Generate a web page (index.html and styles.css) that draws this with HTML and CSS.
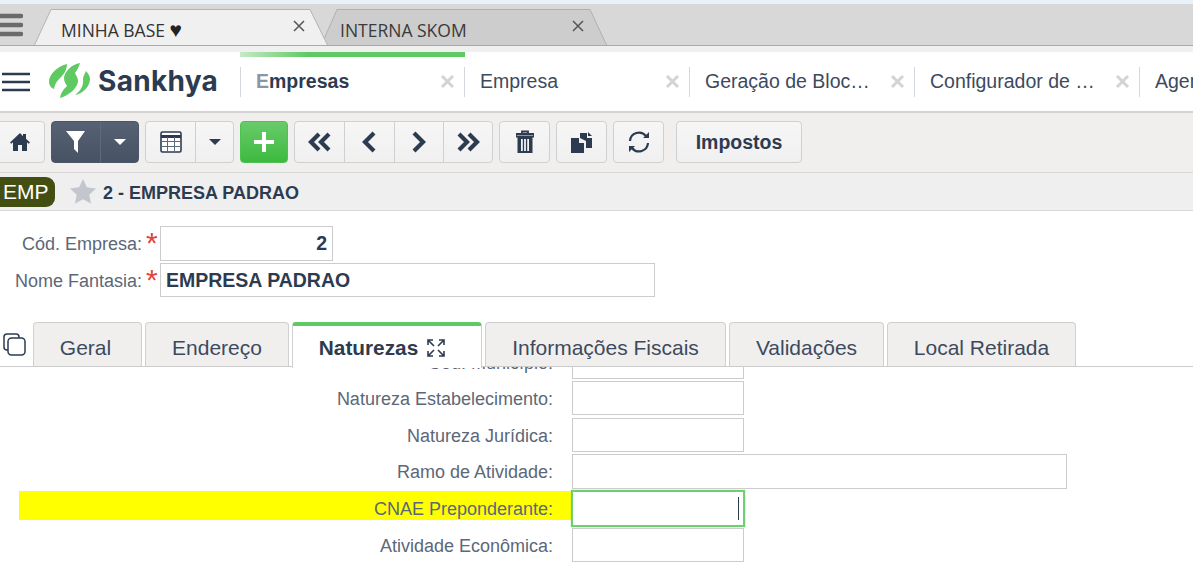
FILE: index.html
```html
<!DOCTYPE html>
<html lang="pt">
<head>
<meta charset="utf-8">
<title>Sankhya</title>
<link rel="stylesheet" href="styles.css">
</head>
<body>
<div class="topstrip"></div>
<div class="browser">
  <svg class="menu-icon" width="24" height="26" viewBox="0 0 24 26"><path d="M0 3h22M0 12h22M0 21h22" stroke="#6a6a6a" stroke-width="4.4" stroke-linecap="round"/></svg>
  <div class="btab btab-active">
    <svg class="btab-shape" width="296" height="38" viewBox="0 0 296 38" preserveAspectRatio="none"><path d="M1 37L18 .5H277L295 37Z" fill="#f0f0f0" stroke="#b4b4b4"/></svg>
    <span class="btab-label">MINHA BASE <span class="heart">♥</span></span>
    <svg class="btab-x" width="12" height="12" viewBox="0 0 12 12"><path d="M1 1l10 10M11 1L1 11" stroke="#555" stroke-width="1.500"/></svg>
  </div>
  <div class="btab btab-other">
    <svg class="btab-shape" width="288" height="38" viewBox="0 0 288 38" preserveAspectRatio="none"><path d="M1 37L17 .5H270L287 37Z" fill="#cdcdcd" stroke="#b0b0b0"/></svg>
    <span class="btab-label">INTERNA SKOM</span>
    <svg class="btab-x" width="12" height="12" viewBox="0 0 12 12"><path d="M1 1l10 10M11 1L1 11" stroke="#555" stroke-width="1.500"/></svg>
  </div>
</div>
<div class="subline"></div>

<header class="appbar">
  <svg class="hamb" width="28" height="20" viewBox="0 0 28 20"><path d="M0 2h28M0 10h28M0 18h28" stroke="#2d3b50" stroke-width="2.6"/></svg>
  <div class="logo">
    <svg width="42" height="38" viewBox="0 0 42 38"><path d="M18 2C9 4 0 12 0 20c0 3 2 6 5 7 1-6 4-9 8-13 3-3 5-8 5-12Z" fill="#5fc962"/><path d="M31 1C23 2 15 10 15 16c0 4 2 6 3 8-3 3-6 6-7 12 8-2 18-10 18-17 0-3-2-6-3-8 2-3 4-6 5-10Z" fill="#5fc962"/><path d="M37 9c-1 3-3 5-3 8 1 5-2 12-8 16 8-1 15-9 15-16 0-3-2-6-4-8Z" fill="#5fc962"/></svg>
    <span class="logo-text">Sankhya</span>
  </div>
  <nav class="apptabs">
    <div class="apptab apptab-active"><span class="apptab-label"><b class="fade">E</b>mpresas</span><svg class="apptab-x" width="15" height="15" viewBox="0 0 15 15"><path d="M2 2l11 11M13 2L2 13" stroke="#d4d4d4" stroke-width="3"/></svg></div>
    <div class="apptab"><span class="apptab-label">Empresa</span><svg class="apptab-x" width="15" height="15" viewBox="0 0 15 15"><path d="M2 2l11 11M13 2L2 13" stroke="#d4d4d4" stroke-width="3"/></svg></div>
    <div class="apptab"><span class="apptab-label">Geração de Bloc…</span><svg class="apptab-x" width="15" height="15" viewBox="0 0 15 15"><path d="M2 2l11 11M13 2L2 13" stroke="#d4d4d4" stroke-width="3"/></svg></div>
    <div class="apptab"><span class="apptab-label">Configurador de …</span><svg class="apptab-x" width="15" height="15" viewBox="0 0 15 15"><path d="M2 2l11 11M13 2L2 13" stroke="#d4d4d4" stroke-width="3"/></svg></div>
    <div class="apptab"><span class="apptab-label">Agenda</span></div>
  </nav>
</header>

<div class="toolbar">
  <div class="btn btn-home">
    <svg width="22" height="20" viewBox="0 0 22 20"><path d="M11 1L1 10.500l1.300 1.300L4 10.300V19h5v-6h4v6h5v-8.700l1.700 1.500 1.300-1.300-4-3.800V2h-3v2.200Z" fill="#2d3b50"/></svg>
  </div>
  <div class="btn-group btn-dark">
    <div class="seg seg-a"><svg width="20" height="23" viewBox="0 0 20 23"><path d="M0 0h19L12 10v12L8 18V10Z" fill="#fff"/></svg></div>
    <div class="seg seg-b"><span class="caret caret-w"></span></div>
  </div>
  <div class="btn-group">
    <div class="seg seg-c"><svg width="22" height="22" viewBox="0 0 22 22"><rect x="1" y="1" width="20" height="20" rx="1.500" fill="#fff" stroke="#2d3b50" stroke-width="1.600"/><path d="M1 5.500h20" stroke="#2d3b50" stroke-width="3"/><path d="M1 10.500h20M1 15.500h20M7.500 6v15M14.500 6v15" stroke="#5d6a7c"/></svg></div>
    <div class="seg seg-d"><span class="caret"></span></div>
  </div>
  <div class="btn btn-add">
    <svg width="22" height="22" viewBox="0 0 22 22"><path d="M11 1v20M1 11h20" stroke="#fff" stroke-width="4"/></svg>
  </div>
  <div class="btn-group">
    <div class="seg seg-n"><svg width="24" height="20" viewBox="0 0 24 20"><path d="M11 2L3 10l8 8M21 2l-8 8 8 8" fill="none" stroke="#2d3b50" stroke-width="4.200"/></svg></div>
    <div class="seg seg-n"><svg width="16" height="22" viewBox="0 0 16 22"><path d="M13 2L4 11l9 9" fill="none" stroke="#2d3b50" stroke-width="4.200"/></svg></div>
    <div class="seg seg-n"><svg width="16" height="22" viewBox="0 0 16 22"><path d="M3 2l9 9-9 9" fill="none" stroke="#2d3b50" stroke-width="4.200"/></svg></div>
    <div class="seg seg-n"><svg width="24" height="20" viewBox="0 0 24 20"><path d="M3 2l8 8-8 8M13 2l8 8-8 8" fill="none" stroke="#2d3b50" stroke-width="4.200"/></svg></div>
  </div>
  <div class="btn btn-icon">
    <svg width="18" height="24" viewBox="0 0 18 24"><path d="M0 4h18v2.500H0ZM6 4V1.500h6V4" fill="none" stroke="#2d3b50" stroke-width="1.800"/><path d="M1.500 7h15v16h-15ZM5 9v12h1.800V9ZM8.100 9v12h1.800V9ZM11.200 9v12H13V9Z" fill="#2d3b50" fill-rule="evenodd"/></svg>
  </div>
  <div class="btn btn-icon">
    <svg width="22" height="21" viewBox="0 0 22 21"><path d="M9 6V1h7v5h5v10h-6V9Z" fill="#2d3b50"/><path d="M17 0v4h4Z" fill="#2d3b50"/><path d="M0 6h8l0 5h5v10H0Z" fill="#2d3b50"/></svg>
  </div>
  <div class="btn btn-icon">
    <svg width="22" height="24" viewBox="0 0 22 24"><path d="M2 11a9 9 0 0 1 16-5M20 13a9 9 0 0 1-16 5" fill="none" stroke="#2d3b50" stroke-width="2.200"/><path d="M15 8h6V2ZM7 16H1v6Z" fill="#2d3b50"/></svg>
  </div>
  <div class="btn btn-text">Impostos</div>
</div>

<div class="crumb">
  <span class="pill">EMP</span>
  <svg class="star" width="26" height="25" viewBox="0 0 26 25"><path d="M13 0l3.900 8.300 9.100 1.100-6.700 6.300 1.800 9L13 20.200 4.900 24.700l1.800-9L0 9.400l9.100-1.100Z" fill="#c3c7cd"/></svg>
  <span class="crumb-title">2 - EMPRESA PADRAO</span>
</div>

<section class="head-form">
  <div class="hrow"><label class="hlabel">Cód. Empresa:</label><span class="req">*</span><div class="input input-code">2</div></div>
  <div class="hrow"><label class="hlabel">Nome Fantasia:</label><span class="req">*</span><div class="input input-name">EMPRESA PADRAO</div></div>
</section>

<div class="tabs">
  <svg class="copy-icon" width="24" height="24" viewBox="0 0 24 24"><rect x="6" y="6" width="17" height="17" rx="3.500" fill="none" stroke="#2d3b50" stroke-width="1.500"/><path d="M6 18H5a3 3 0 0 1-3-3V5a3 3 0 0 1 3-3h9a3 3 0 0 1 3 3v1" fill="none" stroke="#2d3b50" stroke-width="1.500"/></svg>
  <div class="tab t-geral">Geral</div>
  <div class="tab t-end">Endereço</div>
  <div class="tab tab-active t-nat">Naturezas
    <svg width="20" height="20" viewBox="0 0 20 20"><path d="M2 7V2h5M13 2h5v5M18 13v5h-5M7 18H2v-5M2 2l6 6M18 2l-6 6M18 18l-6-6M2 18l6-6" fill="none" stroke="#2d3b50" stroke-width="1.600"/></svg>
  </div>
  <div class="tab t-inf">Informações Fiscais</div>
  <div class="tab t-val">Validações</div>
  <div class="tab t-loc">Local Retirada</div>
</div>

<section class="panel">
  <div class="frow frow-clip"><label class="flabel">Cód. Município:</label><div class="finput"></div></div>
  <div class="frow frow-tall"><label class="flabel">Natureza Estabelecimento:</label><div class="finput"></div></div>
  <div class="frow"><label class="flabel">Natureza Jurídica:</label><div class="finput"></div></div>
  <div class="frow"><label class="flabel">Ramo de Atividade:</label><div class="finput finput-wide"></div></div>
  <div class="frow frow-focus"><label class="flabel flabel-mark">CNAE Preponderante:</label><div class="finput finput-focus"><span class="cursor"></span></div></div>
  <div class="frow"><label class="flabel">Atividade Econômica:</label><div class="finput"></div></div>
</section>
</body>
</html>
```
FILE: styles.css
```css
* { box-sizing: border-box; }
html, body { margin: 0; padding: 0; height: 564px; overflow: hidden; background: #fff; }
body { font-family: "Liberation Sans", Arial, sans-serif; color: #2d3b50; }

.topstrip { height: 4px; background: #eaf2f9; }
.browser {
  height: 42px; background: #d8d8d8; border-bottom: 1px solid #a9a9a9;
  display: flex; align-items: flex-end; overflow: hidden; position: relative;
}
.menu-icon { position: absolute; left: -1px; top: 9px; }
.btab { position: relative; height: 37px; margin-bottom: -1px; display: flex; align-items: center; font-family: "Open Sans", sans-serif; font-size: 17.500px; color: #333; }
.btab-shape { position: absolute; left: 0; top: 0; }
.btab-active { width: 296px; margin-left: 33px; z-index: 2; }
.btab-other { width: 288px; margin-left: -9px; color: #3a3a3a; }
.btab-label { position: relative; padding: 4px 0 0 28px; }
.btab-other .btab-label { padding-left: 20px; }
.heart { font-size: 21px; line-height: 20px; color: #222; }
.btab-x { position: absolute; top: 11px; }
.btab-active .btab-x { left: 260px; }
.btab-other .btab-x { left: 252px; }
.subline { height: 6px; background: #f0f0f0; }

.appbar { height: 61px; display: flex; align-items: stretch; background: #fff; border-bottom: 2px solid #d5d2d2; position: relative; }
.hamb { margin: 20px 0 0 2px; flex: none; }
.logo { display: flex; align-items: center; width: 210px; padding-left: 19px; flex: none; margin-bottom: 2px; }
.logo-text { font-family: Inter, sans-serif; font-weight: 700; font-size: 28px; margin-left: 7px; color: #2d3b50; letter-spacing: .3px; }
.apptabs { display: flex; }
.apptab { width: 225px; flex: none; position: relative; display: flex; align-items: center; justify-content: space-between; padding: 0 9px 0 16px; font-size: 19.500px; color: #3d4a5e; }
.apptab-active { width: 224px; }
.apptab::before { content: ""; position: absolute; left: 0; top: 15px; height: 30px; width: 1px; background: #d3d8de; }
.apptab-active::after { content: ""; position: absolute; left: 0; top: 0; width: 225px; height: 5px; background: linear-gradient(90deg, #c4ebc6, #5fca63 30%); }
.apptab-active .apptab-label { font-weight: 700; color: #2d3b50; }
.fade { color: #8b95a3; }
.apptab-x { flex: none; }

.toolbar { height: 60px; background: #f0efee; border-bottom: 1px solid #d6d6d6; display: flex; align-items: flex-start; padding: 8px 0 0 0; gap: 6px; margin-bottom: 0; }
.btn, .btn-group { height: 42px; border: 1px solid #d0d0d0; border-radius: 4px; background: linear-gradient(#f6f6f6, #f0f0f0); display: flex; align-items: center; justify-content: center; flex: none; }
.btn-home { width: 50px; margin-left: -5px; }
.btn-group { overflow: hidden; }
.btn-dark { background: linear-gradient(#566273, #475364); border-color: #4b5768; }
.seg { height: 100%; display: flex; align-items: center; justify-content: center; border-left: 1px solid #d0d0d0; }
.seg:first-child { border-left: 0; }
.btn-dark .seg { border-left-color: #5f6b7c; }
.seg-a { width: 48px; }
.seg-b { width: 38px; }
.seg-c { width: 49px; }
.seg-d { width: 38px; }
.seg-n { width: 49.250px; }
.caret { width: 0; height: 0; border: 6px solid transparent; border-top: 6px solid #2d3b50; border-bottom: 0; }
.caret-w { border-top-color: #fff; }
.btn-add { width: 48px; background: linear-gradient(#69cb6a, #3dba3f); border-color: #4fc052; }
.btn-icon { width: 51px; }
.btn-text { width: 126px; margin-left: 6px; font-weight: 700; font-size: 19.500px; color: #2d3b50; }

.crumb { height: 38px; background: #efefef; border-bottom: 1px solid #d8d8d8; display: flex; align-items: center; }
.pill { background: #434f12; color: #fff; font-size: 21px; height: 30px; line-height: 30px; padding: 0 0 0 3px; border-radius: 0 9px 9px 0; width: 55px; flex: none; }
.star { margin-left: 15px; }
.crumb-title { font-weight: 700; font-size: 18px; margin: 3px 0 0 7px; }

.head-form { height: 111px; background: #fff; padding-top: 15px; display: flex; flex-direction: column; gap: 2px; }
.hrow { display: flex; align-items: flex-start; height: 35px; }
.hlabel { width: 142px; text-align: right; font-size: 18px; color: #5c6778; line-height: 36px; flex: none; }
.req { width: 18px; padding-left: 4px; color: #e2443d; font-size: 30px; line-height: 34px; height: 35px; }
.input { border: 1px solid #ccc; background: #fff; font-weight: 700; font-size: 19.500px; line-height: 32px; color: #2d3b50; padding: 0 5px; }
.input-code { width: 173px; height: 35px; text-align: right; }
.input-name { width: 495px; height: 34px; }

.tabs { height: 45px; border-bottom: 1px solid #ccc; display: flex; align-items: flex-start; gap: 3px; padding-left: 33px; position: relative; margin-top: 0; }
.copy-icon { position: absolute; left: 2px; top: 10px; }
.tab { height: 44px; background: #f0efee; border: 1px solid #d0d0d0; border-bottom: 0; border-radius: 4px 4px 0 0; font-size: 21px; color: #3d4a5e; display: flex; align-items: center; justify-content: center; padding-top: 7px; flex: none; gap: 8px; }
.tab-active { height: 46px; background: #fff; border-top: 4px solid #5fca63; font-weight: 700; font-size: 20.800px; color: #2d3b50; position: relative; padding: 3px 9px 2px 0; }
.t-geral { width: 109px; padding-right: 4px; }
.t-end { width: 144px; }
.t-nat { width: 190px; }
.t-inf { width: 241px; }
.t-val { width: 155px; }
.t-loc { width: 189px; }

.panel { height: 198px; overflow: hidden; background: #fff; display: flex; flex-direction: column; }
.frow { display: flex; height: 36px; flex: none; align-items: flex-start; }
.frow-clip { margin-top: -22px; }
.frow-tall { height: 37px; }
.frow-focus { height: 38px; }
.flabel { width: 553px; text-align: right; font-size: 18px; color: #5c6778; line-height: 36px; flex: none; }
.finput { width: 172px; height: 34px; border: 1px solid #ccc; background: #fff; margin-left: 19px; flex: none; position: relative; }
.finput-wide { width: 495px; height: 35px; }
.flabel-mark { background: #ff0; margin-left: 19px; width: 553px; height: 29px; margin-top: 1px; padding-right: 19px; flex: none; }
.frow-focus .finput { margin-left: -1px; }
.finput-focus { width: 174px; height: 37px; border: 2px solid #6dd070; box-shadow: 0 0 1px #6dd070; }
.cursor { position: absolute; right: 4px; top: 5px; width: 1px; height: 23px; background: #2d3b50; }
```
